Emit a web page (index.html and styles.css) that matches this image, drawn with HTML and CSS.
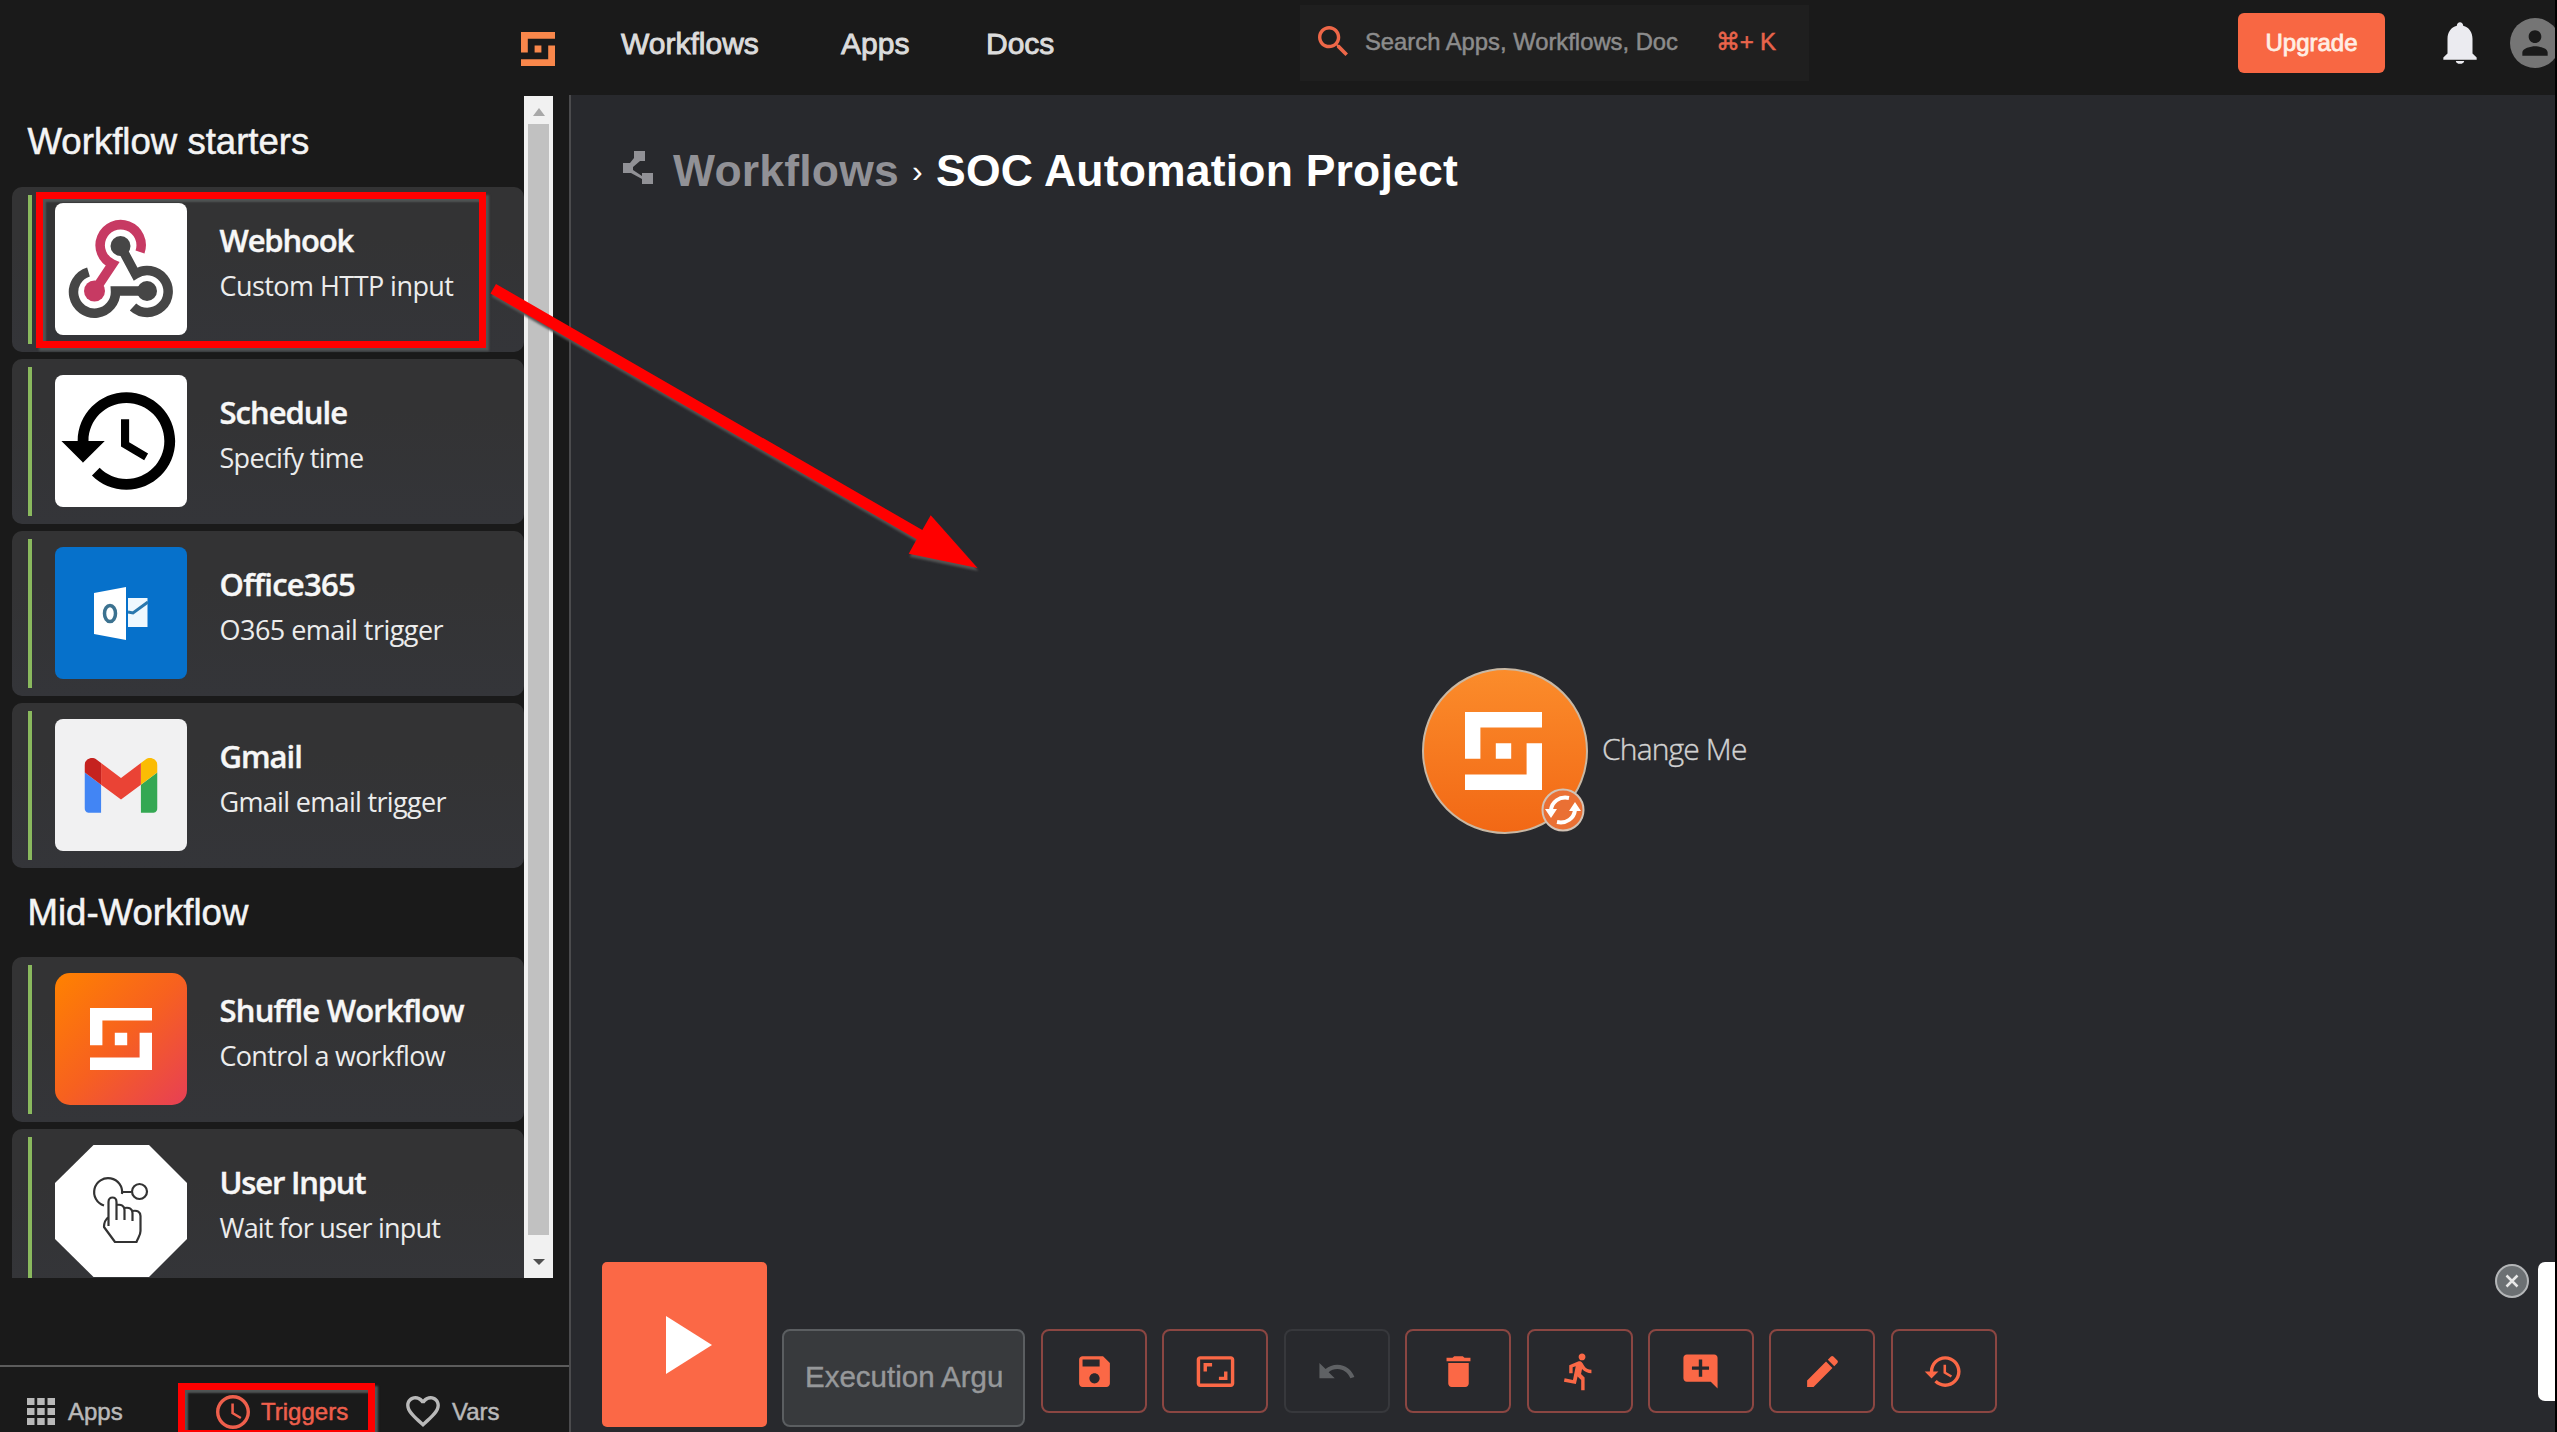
FILE: index.html
```html
<!DOCTYPE html>
<html lang="en">
<head>
<meta charset="utf-8">
<title>SOC Automation Project</title>
<link rel="stylesheet" href="styles.css">
</head>
<body>
<svg width="0" height="0" class="defs">
  <symbol id="shuffle" viewBox="0 0 5 5" preserveAspectRatio="none"><path d="M0 0H5V1H1V3H0zM2 2h1v1H2zM4 2h1v3H0V4h4z"/></symbol>
  <symbol id="history" viewBox="0 0 24 24"><path d="M13 3c-4.97 0-9 4.03-9 9H1l3.89 3.89.07.14L9 12H6c0-3.87 3.13-7 7-7s7 3.13 7 7-3.13 7-7 7c-1.93 0-3.68-.79-4.94-2.06l-1.42 1.42C8.27 19.99 10.51 21 13 21c4.97 0 9-4.03 9-9s-4.03-9-9-9zm-1 5v5l4.28 2.54.72-1.21-3.5-2.08V8H12z"/></symbol>
</svg>
<div class="app">
  <header class="topbar">
    <svg class="brand"><use href="#shuffle"/></svg>
    <nav class="nav"><a>Workflows</a><a>Apps</a><a>Docs</a></nav>
    <div class="search">
      <svg class="search-icon" viewBox="3 3 17.5 17.5"><path d="M15.5 14h-.79l-.28-.27C15.41 12.59 16 11.11 16 9.5 16 5.91 13.09 3 9.5 3S3 5.91 3 9.5 5.91 16 9.5 16c1.61 0 3.09-.59 4.23-1.57l.27.28v.79l5 4.99L20.49 19l-4.99-5zm-6 0C7.01 14 5 11.99 5 9.5S7.01 5 9.5 5 14 7.01 14 9.5 11.99 14 9.5 14z"/></svg>
      <span class="search-text">Search Apps, Workflows, Docs</span>
      <span class="shortcut">⌘+ K</span>
    </div>
    <button class="upgrade">Upgrade</button>
    <svg class="bell" viewBox="0 0 24 24"><path d="M12 22c1.1 0 2-.6 2-1.400h-4c0 .8.9 1.400 2 1.400zM18 17V10c0-3.070-1.630-5.640-4.500-6.320V3.500c0-.83-.67-1.500-1.500-1.500s-1.500.67-1.500 1.500v.18C7.640 4.360 6 6.920 6 10v7l-2 2v1h16v-1z"/></svg>
    <div class="avatar"><svg viewBox="0 0 24 24"><path d="M12 12c2.210 0 4-1.790 4-4s-1.790-4-4-4-4 1.790-4 4 1.790 4 4 4zm0 2c-2.670 0-8 1.340-8 4v2h16v-2c0-2.660-5.330-4-8-4z"/></svg></div>
  </header>

  <div class="body">
    <aside class="sidebar">
      <div class="scroller">
        <div class="list">
          <h2>Workflow starters</h2>
          <div class="cards">
            <div class="card">
              <svg class="tile" viewBox="0 0 132 132">
                <rect width="132" height="132" fill="#fff"/>
                <g fill="none" stroke-width="9.500">
                  <g stroke="#464646"><path d="M65.500 43L80.500 71A21 21 0 1 1 78 104M92 88H60.500A21 21 0 1 1 33.500 69"/></g>
                  <path stroke="#c73a63" d="M85 49A20.500 20.500 0 1 0 57.500 61L39.500 88"/>
                </g>
                <circle cx="65.500" cy="43" r="10" fill="#464646"/><circle cx="92" cy="88" r="10" fill="#464646"/><circle cx="39.500" cy="88" r="10.500" fill="#c73a63"/>
              </svg>
              <div class="info"><h3 class="t-web">Webhook</h3><p class="s-web">Custom HTTP input</p></div>
            </div>
            <div class="card">
              <svg class="tile" viewBox="0 0 132 132"><rect width="132" height="132" fill="#fff"/><use href="#history" x="1" y="1" width="130" height="130"/></svg>
              <div class="info"><h3 class="t-sch">Schedule</h3><p class="s-sch">Specify time</p></div>
            </div>
            <div class="card">
              <svg class="tile" viewBox="0 0 132 132">
                <rect width="132" height="132" fill="#0671cb"/>
                <path fill="#eff8fe" d="M73 51h19.500v29H73z"/><path d="M73 65l5 1 15-11" fill="none" stroke="#2b78ae" stroke-width="3"/>
                <path fill="#fff" d="M39 46l32-6v53l-32-6z"/><ellipse cx="55" cy="66.500" rx="5.500" ry="8" fill="none" stroke="#3c7290" stroke-width="3.500"/>
              </svg>
              <div class="info"><h3 class="t-off">Office365</h3><p class="s-off">O365 email trigger</p></div>
            </div>
            <div class="card">
              <svg class="tile" viewBox="0 0 132 132">
                <rect width="132" height="132" fill="#f1f1f2"/>
                <svg x="29.500" y="39" width="73" height="55" viewBox="52 42 88 66">
                  <path fill="#4285f4" d="M58 108h14V74L52 59v43c0 3.320 2.690 6 6 6"/><path fill="#34a853" d="M120 108h14c3.320 0 6-2.690 6-6V59l-20 15"/><path fill="#fbbc04" d="M120 48v26l20-15v-8c0-7.420-8.470-11.650-14.400-7.200"/><path fill="#ea4335" d="M72 74V48l24 18 24-18v26L96 92"/><path fill="#c5221f" d="M52 51v8l20 15V48l-5.600-4.200c-5.940-4.450-14.400-.22-14.400 7.200"/>
                </svg>
              </svg>
              <div class="info"><h3 class="t-gm">Gmail</h3><p class="s-gm">Gmail email trigger</p></div>
            </div>
          </div>
          <h2 class="mid">Mid-Workflow</h2>
          <div class="cards">
            <div class="card">
              <div class="tile tile-shuffle"><svg><use href="#shuffle"/></svg></div>
              <div class="info"><h3 class="t-shu">Shuffle Workflow</h3><p class="s-shu">Control a workflow</p></div>
            </div>
            <div class="card">
              <svg class="tile tile-octagon" viewBox="0 0 132 132">
                <path fill="#fff" d="M38.500 0H94l38 38v56l-38 38H38.500L0 94V38z"/>
                <g fill="none" stroke="#333" stroke-width="2.200" stroke-linejoin="round">
                  <path d="M49 60.500A14 14 0 1 1 67 49M68 47h8"/><circle cx="84.500" cy="46.500" r="7.500"/>
                  <path d="M53.500 81V57c0-6 8-6 8 0v18M61.500 60c5-1 8 1 8 5v10M69.500 63c5-1 8 1 8 5v8M77.500 66c5-1 8 1 8 5v15c0 4-2 6-4 11H60l-11-15c0-4 2-8 4.500-10"/>
                </g>
              </svg>
              <div class="info"><h3 class="t-usr">User Input</h3><p class="s-usr">Wait for user input</p></div>
            </div>
          </div>
        </div>
        <div class="scrollbar">
          <svg viewBox="0 0 12 8"><path d="M6 0l6 8H0z" fill="#a8a8a8"/></svg>
          <div class="thumb"></div>
          <svg viewBox="0 0 12 8"><path d="M0 1h12L6 7z" fill="#505050"/></svg>
        </div>
      </div>
      <div class="tabs">
        <div class="tab tab-apps">
          <svg width="28" height="27" viewBox="0 0 28 27"><path d="M0 0h7.500v7H0zM10.200 0h7.500v7h-7.500zM20.500 0H28v7h-7.500zM0 10h7.500v7H0zM10.200 10h7.500v7h-7.500zM20.500 10H28v7h-7.500zM0 20h7.500v7H0zM10.200 20h7.500v7h-7.500zM20.500 20H28v7h-7.500z"/></svg>
          <span>Apps</span>
        </div>
        <div class="tab tab-triggers">
          <svg width="34" height="34" viewBox="2 2 20 20"><path d="M11.990 2C6.470 2 2 6.480 2 12s4.470 10 9.990 10C17.520 22 22 17.520 22 12S17.520 2 11.990 2zM12 20c-4.420 0-8-3.580-8-8s3.580-8 8-8 8 3.580 8 8-3.580 8-8 8zm.5-13H11v6l5.250 3.150.75-1.230-4.500-2.670z"/></svg>
          <span>Triggers</span>
        </div>
        <div class="tab tab-vars">
          <svg width="34" height="31" viewBox="2 3 20 18.350"><path d="M16.500 3c-1.740 0-3.410.81-4.500 2.090C10.910 3.810 9.240 3 7.500 3 4.420 3 2 5.420 2 8.500c0 3.780 3.400 6.860 8.550 11.540L12 21.350l1.450-1.320C18.600 15.360 22 12.280 22 8.500 22 5.420 19.580 3 16.500 3zm-4.400 15.550l-.1.100-.1-.1C7.140 14.240 4 11.390 4 8.500 4 6.500 5.500 5 7.500 5c1.540 0 3.040.99 3.570 2.360h1.870C13.460 5.990 14.960 5 16.500 5c2 0 3.500 1.500 3.500 3.500 0 2.890-3.140 5.740-7.900 10.050z"/></svg>
          <span>Vars</span>
        </div>
      </div>
    </aside>

    <main class="canvas">
      <div class="crumbs">
        <svg class="crumb-icon" viewBox="0 0 30 33"><path d="M11 0h11v10h-5l-7 6v3l9 6v-3h11v11H19v-5L8 22H0V12h7l4-5z"/></svg>
        <span class="crumb-root">Workflows</span><span class="crumb-sep">›</span><span class="crumb-name">SOC Automation Project</span>
      </div>

      <div class="node">
        <div class="node-circle"><svg><use href="#shuffle"/></svg></div>
        <svg class="node-badge" viewBox="0 0 44 44">
          <circle cx="22" cy="22" r="20.500" fill="#ea7034" stroke="#d2c3b6" stroke-width="2"/>
          <path d="M28 10C18 8 11 14 10 22M16 34c10 2 17-4 18-12" fill="none" stroke="#fff" stroke-width="4"/>
          <path fill="#fff" d="M4 21h12l-6 9zM28 23h12l-6-9z"/>
        </svg>
        <span class="node-label">Change Me</span>
      </div>

      <div class="toolbar">
        <button class="play"><svg viewBox="0 0 46 58"><path d="M0 0l46 29L0 58z"/></svg></button>
        <div class="argument"><span>Execution Argument</span></div>
        <button class="tool"><svg viewBox="0 0 24 24"><path d="M17 3H5c-1.110 0-2 .9-2 2v14c0 1.100.89 2 2 2h14c1.100 0 2-.9 2-2V7l-4-4zm-5 16c-1.660 0-3-1.340-3-3s1.340-3 3-3 3 1.340 3 3-1.340 3-3 3zm3-10H5V5h10v4z"/></svg></button>
        <button class="tool"><svg viewBox="0 0 24 24"><path d="M19 12h-2v3h-3v2h5v-5zM7 9h3V7H5v5h2V9zm14-6H3c-1.100 0-2 .9-2 2v14c0 1.100.9 2 2 2h18c1.100 0 2-.9 2-2V5c0-1.100-.9-2-2-2zm0 16.010H3V4.990h18v14.020z"/></svg></button>
        <button class="tool tool-off"><svg viewBox="0 0 24 24"><path d="M12.500 8c-2.650 0-5.050.99-6.900 2.600L2 7v9h9l-3.620-3.620c1.390-1.160 3.160-1.880 5.120-1.880 3.540 0 6.550 2.310 7.600 5.500l2.370-.78C21.080 11.030 17.150 8 12.500 8z"/></svg></button>
        <button class="tool"><svg viewBox="0 0 24 24"><path d="M6 19c0 1.100.9 2 2 2h8c1.100 0 2-.9 2-2V7H6v12zM19 4h-3.500l-1-1h-5l-1 1H5v2h14V4z"/></svg></button>
        <button class="tool"><svg viewBox="0 0 24 24"><path d="M13.490 5.480c1.100 0 2-.9 2-2s-.9-2-2-2-2 .9-2 2 .9 2 2 2zm-3.600 13.900l1-4.400 2.100 2v6h2v-7.500l-2.100-2 .6-3c1.300 1.500 3.300 2.500 5.500 2.500v-2c-1.900 0-3.500-1-4.300-2.400l-1-1.600c-.4-.6-1-1-1.700-1-.3 0-.5.1-.8.1l-5.200 2.200v4.700h2v-3.400l1.800-.7-1.600 8.100-4.900-1-.4 2 7 1.400z"/></svg></button>
        <button class="tool"><svg viewBox="0 0 24 24"><path d="M21.990 4c0-1.100-.89-2-1.990-2H4c-1.100 0-2 .9-2 2v12c0 1.100.9 2 2 2h14l4 4-.01-18zM17 11h-4v4h-2v-4H7V9h4V5h2v4h4v2z"/></svg></button>
        <button class="tool"><svg viewBox="0 0 24 24"><path d="M3 17.250V21h3.750L17.810 9.940l-3.750-3.750L3 17.250zM20.710 7.040c.39-.39.39-1.020 0-1.410l-2.340-2.340c-.39-.39-1.020-.39-1.410 0l-1.830 1.830 3.750 3.750 1.830-1.830z"/></svg></button>
        <button class="tool"><svg><use href="#history"/></svg></button>
      </div>

      <svg class="close" viewBox="0 0 34 34"><circle cx="17" cy="17" r="16" fill="#6c7073" stroke="#b4b6b8" stroke-width="2"/><path d="M11.500 11.500l11 11m0-11l-11 11" stroke="#e8e8e8" stroke-width="2.500"/></svg>
      <div class="drawer"></div>
    </main>
  </div>

  <div class="mark mark-webhook"></div>
  <div class="mark mark-triggers"></div>
  <svg class="arrow" viewBox="0 0 2557 1432"><path d="M496 284L922.300 530L930.700 515.300L977.500 568L908.700 553.700L916.700 539.300L490.500 293.500z" fill="#f00"/></svg>
</div>
</body>
</html>
```
FILE: styles.css
```css
* { box-sizing: border-box; }
body { margin: 0; background: #000; font-family: "Liberation Sans", Arial, sans-serif; }
h2, h3, p { margin: 0; }
button { margin: 0; padding: 0; font: inherit; }
svg { display: block; flex: none; }
.defs { position: absolute; }

.app {
  position: relative;
  width: 2557px; height: 1432px;
  overflow: hidden;
  display: flex; flex-direction: column;
  background: #1a1a1a;
  border-right: 2px solid #000;
}

/* Top bar */
.topbar {
  flex: none; height: 95px; padding: 0 0 10px 521px;
  display: flex; align-items: center;
  overflow: hidden;
}
.brand { width: 34px; height: 34px; margin: 13px 66px 0 0; fill: #f9874b; }
.nav {
  width: 679px; padding-top: 3px; flex: none;
  display: flex;
  font-size: 30px; color: #dcdcdc; -webkit-text-stroke: .9px #dcdcdc;
}
.nav a:nth-child(1) { width: 220px; }
.nav a:nth-child(2) { width: 145px; }
.search {
  flex: none; width: 509px; height: 76px; padding: 0 0 3px 18px;
  display: flex; align-items: center;
  background: #1f1f1f;
}
.search-icon { width: 30px; height: 30px; fill: #ee6748; }
.search-text {
  width: 313px; margin: 1px 38px 0 17px;
  overflow: hidden; white-space: nowrap;
  font-size: 23.8px; line-height: 32px; color: #8c8c8c; -webkit-text-stroke: .5px #8c8c8c;
}
.shortcut { padding-top: 1px; font: 24px/32px "Liberation Sans", "DejaVu Sans", sans-serif; color: #e9644b; white-space: nowrap; letter-spacing: -.2px; -webkit-text-stroke: .5px #e9644b; }
.upgrade {
  flex: none; width: 147px; height: 60px; margin-left: 429px;
  border: 0; border-radius: 6px;
  background: #f86743; color: #ffeee4;
  font-size: 24px; -webkit-text-stroke: .8px #ffeee4;
}
.bell { width: 50px; height: 50px; margin: 0 25px 0 50px; fill: #ebebf0; }
.avatar {
  flex: none; width: 50px; height: 50px; border-radius: 50%;
  display: grid; place-items: center;
  background: #757575;
}
.avatar svg { width: 38px; height: 38px; fill: #1a1a1a; }

/* Sidebar */
.body { flex: 1; min-height: 0; display: flex; }
.sidebar {
  flex: none; width: 571px;
  display: flex; flex-direction: column;
  border-right: 2px solid #4b4b4d;
}
.scroller { height: 1182px; margin-top: 1px; padding-left: 11.5px; display: flex; }
.list { width: 512.5px; overflow: hidden; }
.list h2 {
  height: 91px; line-height: 91px; padding-left: 16px;
  font-weight: 400; font-size: 36.600px; color: #f4f4f4; -webkit-text-stroke: .5px #f4f4f4;
}
.list h2.mid { height: 89.5px; line-height: 89px; }
.cards { display: flex; flex-direction: column; gap: 7.5px; }
.card {
  flex: none; height: 164.5px; padding: 8px 16px;
  display: flex;
  border-radius: 10px;
  background: linear-gradient(#333334 30%, #343539);
}
.card::before { content: ""; width: 4px; height: 149px; background: #8ab95e; }
.tile { width: 132px; height: 132px; margin: 8px 33px 0 23px; border-radius: 8px; flex: none; }
.tile-shuffle {
  display: grid; place-items: center; border-radius: 15px;
  background: linear-gradient(135deg, #ff8200, #f7611f 50%, #e73f55);
}
.tile-shuffle svg { width: 62px; height: 62px; fill: #fff; }
.tile-octagon { border-radius: 0; }
.info { padding-top: 25px; font-family: "Open Sans", "Noto Sans", sans-serif; white-space: nowrap; }
.info h3 { height: 46px; line-height: 40px; font-size: 31px; font-weight: 600; color: #f7f7f7; -webkit-text-stroke: .4px #f7f7f7; }
.info p { line-height: 40px; font-size: 27px; color: #ececec; }
.t-web { letter-spacing: -1.150px; }
.t-sch { letter-spacing: -1px; }
.t-off { letter-spacing: -.7px; }
.t-gm { letter-spacing: -1px; }
.t-shu { letter-spacing: -.780px; }
.t-usr { letter-spacing: -1.200px; }
.s-web { letter-spacing: -.550px; }
.s-sch { letter-spacing: -.7px; }
.s-off { letter-spacing: -.530px; }
.s-gm { letter-spacing: -.670px; }
.s-shu { letter-spacing: -.7px; }
.s-usr { letter-spacing: -.780px; }

.scrollbar {
  width: 29px; padding: 12px 4px;
  display: flex; flex-direction: column; align-items: center; justify-content: space-between;
  background: #f1f1f1;
}
.scrollbar svg { width: 12px; height: 8px; }
.scrollbar .thumb { width: 21.5px; height: 1111px; margin-bottom: 15px; background: #c1c1c1; }

.tabs {
  flex: 1; margin-top: 87px; padding: 28px 0 0 27px;
  display: flex; align-items: flex-start;
  border-top: 2px solid #5c5c5c;
  font-size: 24px;
}
.tab { display: flex; align-items: center; height: 33px; color: #b9b9b9; fill: #b9b9b9; -webkit-text-stroke: .5px; }
.tab-apps { width: 189px; gap: 13px; }
.tab-triggers { width: 190px; gap: 11px; color: #ee5f4c; fill: #ee5f4c; }
.tab-vars { gap: 12px; }

/* Canvas */
.canvas { position: relative; flex: 1; display: flex; flex-direction: column; justify-content: space-between; background: #28292d; overflow: hidden; }
.crumbs {
  display: flex; align-items: center; height: 60px; margin: 46px 0 0 52px;
  font-weight: 700; font-size: 44.500px; white-space: nowrap;
}
.crumb-icon { width: 30px; height: 33px; margin: -7px 20px 0 0; fill: #919196; }
.crumb-root { width: 237px; color: #919196; letter-spacing: .2px; }
.crumb-sep { width: 26px; font-size: 32px; font-weight: 400; color: #fff; text-indent: 2px; }
.crumb-name { color: #fff; letter-spacing: .2px; }

.node { position: absolute; left: 851px; top: 573px; width: 400px; height: 166px; display: flex; align-items: center; }
.node-circle {
  flex: none; width: 166px; height: 166px; border-radius: 50%;
  display: grid; place-items: center;
  border: 2px solid #c9b8a4;
  background: linear-gradient(#fb8c2b, #f26815);
}
.node-circle svg { width: 77px; height: 78px; margin-right: 4px; fill: #fff; }
.node-badge { position: absolute; left: 119px; top: 120px; width: 44px; height: 44px; }
.node-label { margin: -5px 0 0 14px; font: 300 30px/40px "Open Sans", "Noto Sans", sans-serif; color: #d2d2d2; white-space: nowrap; letter-spacing: -.850px; -webkit-text-stroke: .4px #d2d2d2; }

.toolbar { display: flex; align-items: flex-start; margin: 0 0 5px 31px; height: 165px; }
.play {
  width: 165px; height: 165px; padding-left: 8px;
  display: grid; place-items: center;
  border: 0; border-radius: 5px; background: #fb6846;
}
.play svg { width: 46px; height: 58px; fill: #fff; }
.argument {
  width: 243px; height: 98px; margin: 67px 16px 0 15px; padding: 0 21px 2px 21px;
  display: flex; align-items: center;
  border: 2px solid #5b5e61; border-radius: 8px;
  background: #383a3d;
  font-size: 29.500px; color: #96989a; -webkit-text-stroke: .4px #96989a;
}
.argument span { overflow: hidden; white-space: nowrap; }
.tool {
  width: 106px; height: 84px; margin: 67px 15.400px 0 0;
  display: grid; place-items: center;
  border: 2px solid #8b4642; border-radius: 8px;
  background: transparent; fill: #fb6846;
}
.tool svg { width: 41px; height: 41px; }
.tool-off { border-color: #37383c; fill: #5f6164; }

.close { position: absolute; left: 1924px; top: 1169px; width: 34px; height: 34px; }
.drawer { position: absolute; right: -10px; top: 1167px; width: 27px; height: 139px; border-radius: 7px; background: #fff; }

/* Annotations */
.mark { position: absolute; border: 7px solid #f00; box-shadow: 3px 3px 2px #505555, inset 3px 3px 2px #505555; }
.mark-webhook { left: 36px; top: 192px; width: 450px; height: 156px; }
.mark-triggers { left: 178px; top: 1383px; width: 197px; height: 54px; }
.arrow { position: absolute; left: 0; top: 0; width: 2557px; height: 1432px; filter: drop-shadow(1px 3px 1px #555); }
```
